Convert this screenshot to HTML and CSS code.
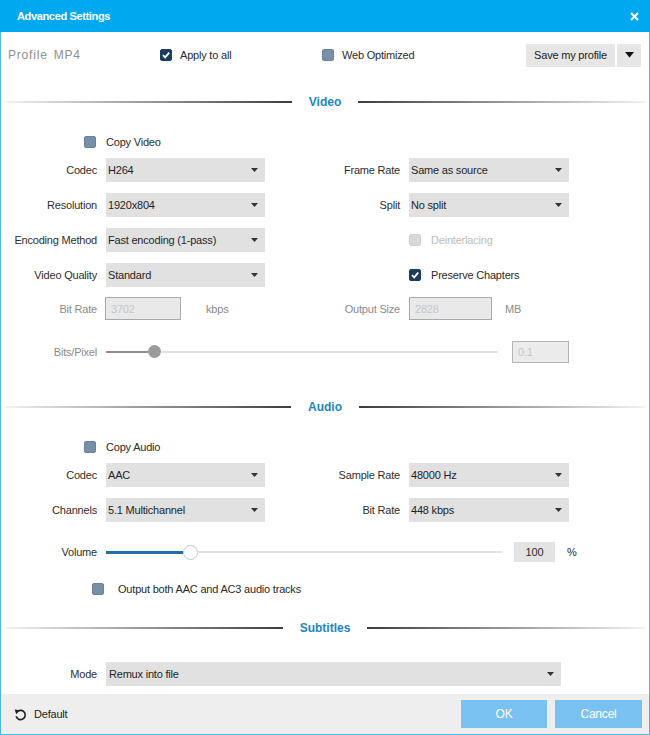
FILE: index.html
```html
<!DOCTYPE html>
<html>
<head>
<meta charset="utf-8">
<link rel="stylesheet" href="styles.css">
</head>
<body>
<div class="window">
  <div class="titlebar">
    <span class="title">Advanced Settings</span>
    <svg class="close" width="9" height="9" viewBox="0 0 9 9"><path d="M1 1L8 8M8 1L1 8" stroke="#fff" stroke-width="2"/></svg>
  </div>

  <div class="toprow">
    <span class="profile">Profile MP4</span>
    <div class="check"><span class="box on"><svg width="10" height="10" viewBox="0 0 10 10"><path d="M2 5.2L4.2 7.4L8.2 2.6" fill="none" stroke="#fff" stroke-width="1.8"/></svg></span>Apply to all</div>
    <div class="check"><span class="box"></span>Web Optimized</div>
    <div class="savegroup">
      <div class="btn save">Save my profile</div>
      <div class="btn arrow"><svg width="9" height="6" viewBox="0 0 9 6"><path d="M0 0H9L4.5 5.5Z" fill="#111"/></svg></div>
    </div>
  </div>

  <div class="sep sep-video"><span class="line l"></span><span class="sep-title">Video</span><span class="line r"></span></div>

  <div class="row chkrow mt25">
    <span class="box cb-left"></span>
    <span class="c2">Copy Video</span>
  </div>
  <div class="row mt8">
    <span class="lbl">Codec</span>
    <div class="select"><span>H264</span><svg width="7" height="4" viewBox="0 0 7 4"><path d="M0 0H7L3.5 4Z" fill="#333"/></svg></div>
    <span class="lbl">Frame Rate</span>
    <div class="select"><span>Same as source</span><svg width="7" height="4" viewBox="0 0 7 4"><path d="M0 0H7L3.5 4Z" fill="#333"/></svg></div>
  </div>
  <div class="row mt11">
    <span class="lbl">Resolution</span>
    <div class="select"><span>1920x804</span><svg width="7" height="4" viewBox="0 0 7 4"><path d="M0 0H7L3.5 4Z" fill="#333"/></svg></div>
    <span class="lbl">Split</span>
    <div class="select"><span>No split</span><svg width="7" height="4" viewBox="0 0 7 4"><path d="M0 0H7L3.5 4Z" fill="#333"/></svg></div>
  </div>
  <div class="row mt11">
    <span class="lbl">Encoding Method</span>
    <div class="select"><span>Fast encoding (1-pass)</span><svg width="7" height="4" viewBox="0 0 7 4"><path d="M0 0H7L3.5 4Z" fill="#333"/></svg></div>
    <span></span>
    <div class="check c4 gap10 disabled"><span class="box dis"></span>Deinterlacing</div>
  </div>
  <div class="row mt11">
    <span class="lbl">Video Quality</span>
    <div class="select"><span>Standard</span><svg width="7" height="4" viewBox="0 0 7 4"><path d="M0 0H7L3.5 4Z" fill="#333"/></svg></div>
    <span></span>
    <div class="check c4 gap10"><span class="box on"><svg width="10" height="10" viewBox="0 0 10 10"><path d="M2 5.2L4.2 7.4L8.2 2.6" fill="none" stroke="#fff" stroke-width="1.8"/></svg></span>Preserve Chapters</div>
  </div>
  <div class="row mt10 h23">
    <span class="lbl muted">Bit Rate</span>
    <div class="field"><span class="inp w76">3702</span><span class="unit u-kbps">kbps</span></div>
    <span class="lbl muted">Output Size</span>
    <div class="field"><span class="inp w83">2828</span><span class="unit u-mb">MB</span></div>
  </div>
  <div class="row mt20 h23">
    <span class="lbl muted">Bits/Pixel</span>
    <div class="span-slider">
      <div class="slider grey"><span class="fill f42"></span><span class="thumb"></span><span class="rest"></span></div>
      <span class="inp w57">0.1</span>
    </div>
  </div>

  <div class="sep sep-audio"><span class="line l"></span><span class="sep-title">Audio</span><span class="line r"></span></div>

  <div class="row chkrow mt25">
    <span class="box cb-left"></span>
    <span class="c2">Copy Audio</span>
  </div>
  <div class="row mt8">
    <span class="lbl">Codec</span>
    <div class="select"><span>AAC</span><svg width="7" height="4" viewBox="0 0 7 4"><path d="M0 0H7L3.5 4Z" fill="#333"/></svg></div>
    <span class="lbl">Sample Rate</span>
    <div class="select"><span>48000 Hz</span><svg width="7" height="4" viewBox="0 0 7 4"><path d="M0 0H7L3.5 4Z" fill="#333"/></svg></div>
  </div>
  <div class="row mt11">
    <span class="lbl">Channels</span>
    <div class="select"><span>5.1 Multichannel</span><svg width="7" height="4" viewBox="0 0 7 4"><path d="M0 0H7L3.5 4Z" fill="#333"/></svg></div>
    <span class="lbl">Bit Rate</span>
    <div class="select"><span>448 kbps</span><svg width="7" height="4" viewBox="0 0 7 4"><path d="M0 0H7L3.5 4Z" fill="#333"/></svg></div>
  </div>
  <div class="row mt19 h22">
    <span class="lbl">Volume</span>
    <div class="span-volume">
      <div class="slider blue"><span class="fill f77"></span><span class="thumb"></span><span class="rest"></span></div>
      <span class="vol-inp">100</span>
      <span class="pct">%</span>
    </div>
  </div>
  <div class="outrow mt18">
    <div class="check gap14"><span class="box"></span>Output both AAC and AC3 audio tracks</div>
  </div>

  <div class="sep sep-sub"><span class="line l"></span><span class="sep-title">Subtitles</span><span class="line r"></span></div>

  <div class="row mt27">
    <span class="lbl">Mode</span>
    <div class="select wide"><span>Remux into file</span><svg width="7" height="4" viewBox="0 0 7 4"><path d="M0 0H7L3.5 4Z" fill="#333"/></svg></div>
  </div>

  <div class="footer">
    <div class="default">
      <svg width="13" height="13" viewBox="0 0 14 14"><path d="M4.2 3.4A5 5 0 1 1 2.3 9" fill="none" stroke="#222" stroke-width="1.8"/><path d="M0.8 1.6L6.4 2.4L2.4 6.6Z" fill="#222"/></svg>
      <span>Default</span>
    </div>
    <div class="buttons">
      <div class="fbtn ok">OK</div>
      <div class="fbtn cancel">Cancel</div>
    </div>
  </div>
</div>
</body>
</html>
```

FILE: styles.css
```css
html, body {
  margin: 0;
  padding: 0;
  background: #fff;
}
body {
  font-family: "Liberation Sans", Arial, sans-serif;
  font-size: 11px;
  letter-spacing: -0.2px;
  color: #2a2a2a;
}
.window {
  width: 650px;
  height: 735px;
  box-sizing: border-box;
  border: 1px solid #4db8e6;
  border-top: none;
  display: flex;
  flex-direction: column;
  background: #fff;
}
.titlebar {
  height: 32px;
  margin: 0 -1px;
  background: #00a9ef;
  display: flex;
  align-items: center;
  justify-content: space-between;
  padding: 0 11px 0 17px;
  color: #fff;
  font-weight: bold;
  font-size: 11px;
  letter-spacing: -0.35px;
}
.close { display: block; }

/* top row */
.toprow {
  margin-top: 11px;
  height: 24px;
  display: grid;
  grid-template-columns: 152px 162px 1fr auto;
  align-items: center;
  padding: 0 8px 0 7px;
}
.profile {
  color: #8f8f8f;
  font-size: 12px;
  letter-spacing: 0.8px;
  word-spacing: 2px;
}
.check {
  display: flex;
  align-items: center;
  gap: 8px;
  color: #2a2a2a;
}
.gap10 { gap: 10px; }
.gap14 { gap: 14px; }
.check.disabled { color: #bcbcbc; }
.box {
  width: 12px;
  height: 12px;
  box-sizing: border-box;
  border-radius: 2px;
  background: #7890a7;
  border: 1px solid #6b8298;
  display: flex;
  align-items: center;
  justify-content: center;
  flex: none;
}
.box.on {
  background: #1d3d5d;
  border-color: #1d3d5d;
}
.box.dis {
  background: #d9d9d9;
  border-color: #d2d2d2;
}
.savegroup {
  display: flex;
  gap: 2px;
}
.btn {
  height: 23px;
  background: #e6e6e6;
  color: #222;
  display: flex;
  align-items: center;
  justify-content: center;
}
.btn.save { width: 89px; }
.btn.arrow { width: 24px; }

/* separators */
.sep {
  display: flex;
  align-items: center;
  height: 14px;
  padding: 0 4px;
}
.sep-video { margin-top: 28px; }
.sep-audio { margin-top: 37px; }
.sep-sub { margin-top: 24px; }
.line {
  flex: 1;
  height: 2px;
}
.line.l { background: linear-gradient(to right, #f2f2f2, #3d3d3d); }
.line.r { background: linear-gradient(to right, #3d3d3d, #f2f2f2); }
.sep-title {
  padding: 0 17px;
  color: #1a86c2;
  font-weight: bold;
  font-size: 12px;
  letter-spacing: 0;
}

/* form rows */
.row {
  display: grid;
  grid-template-columns: 96px 159px 126px 160px 1fr;
  column-gap: 9px;
  align-items: center;
  height: 24px;
}
.chkrow { height: 16px; }
.h23 { height: 23px; }
.h22 { height: 22px; }
.mt8 { margin-top: 8px; }
.mt10 { margin-top: 10px; }
.mt11 { margin-top: 11px; }
.mt18 { margin-top: 18px; }
.mt19 { margin-top: 19px; }
.mt20 { margin-top: 20px; }
.mt25 { margin-top: 25px; }
.mt27 { margin-top: 27px; }
.cb-left {
  justify-self: end;
  margin-right: 1px;
}
.c4 { grid-column: 4; }
.lbl {
  text-align: right;
  color: #2e2e2e;
  white-space: nowrap;
}
.lbl.muted { color: #8a8a8a; }
.select {
  height: 24px;
  background: #e1e1e1;
  display: flex;
  align-items: center;
  justify-content: space-between;
  padding: 0 7px 0 2px;
  color: #1f1f1f;
  white-space: nowrap;
}
.select.wide {
  grid-column: 2 / -1;
  width: 455px;
  box-sizing: border-box;
  padding-left: 3px;
}
.field {
  display: flex;
  align-items: center;
}
.inp {
  height: 23px;
  box-sizing: border-box;
  border: 1px solid #a9a9a9;
  background: #e9e9e9;
  color: #c6c6c6;
  display: flex;
  align-items: center;
  padding-left: 5px;
}
.w76 { width: 76px; margin-left: -1px; }
.w83 { width: 83px; }
.w57 {
  width: 57px;
  height: 22px;
  flex: none;
  margin-left: 14px;
  background: #ebebeb;
  border-color: #b3b3b3;
}
.unit { color: #8a8a8a; }
.u-kbps { margin-left: 25px; }
.u-mb { margin-left: 13px; }

/* sliders */
.span-slider {
  grid-column: 2 / 5;
  display: flex;
  align-items: center;
}
.span-volume {
  grid-column: 2 / -1;
  display: flex;
  align-items: center;
}
.slider {
  display: flex;
  align-items: center;
  height: 16px;
}
.span-slider .slider { flex: 1; }
.span-volume .slider { width: 396px; flex: none; }
.rest {
  flex: 1;
  height: 2px;
  background: #e1e1e1;
}
.fill { height: 2px; }
.f42 { width: 42px; }
.f77 { width: 77px; }
.slider.grey .fill { background: #8d8d8d; }
.slider.grey .thumb {
  width: 13px;
  height: 13px;
  border-radius: 50%;
  background: #9c9c9c;
  flex: none;
}
.slider.blue .fill {
  height: 3px;
  background: #1f6ea4;
}
.slider.blue .thumb {
  width: 15px;
  height: 15px;
  box-sizing: border-box;
  border-radius: 50%;
  background: #fff;
  border: 1px solid #c4c4c4;
  flex: none;
}
.vol-inp {
  margin-left: 12px;
  width: 41px;
  height: 20px;
  background: #e3e3e3;
  display: flex;
  align-items: center;
  justify-content: center;
  color: #2a2a2a;
}
.pct {
  margin-left: 12px;
  color: #2a2a2a;
}
.outrow {
  height: 16px;
  display: flex;
  align-items: center;
  padding-left: 91px;
}

/* footer */
.footer {
  margin-top: auto;
  height: 40px;
  background: #eeeeee;
  display: flex;
  align-items: center;
  padding: 0 7px 0 13px;
}
.default {
  display: flex;
  align-items: center;
  gap: 7px;
  color: #222;
}
.default svg { display: block; }
.buttons {
  margin-left: auto;
  display: flex;
  gap: 8px;
}
.fbtn {
  height: 28px;
  background: #79c1f0;
  color: #fff;
  font-size: 12px;
  display: flex;
  align-items: center;
  justify-content: center;
}
.fbtn.ok { width: 86px; }
.fbtn.cancel { width: 87px; }
```
